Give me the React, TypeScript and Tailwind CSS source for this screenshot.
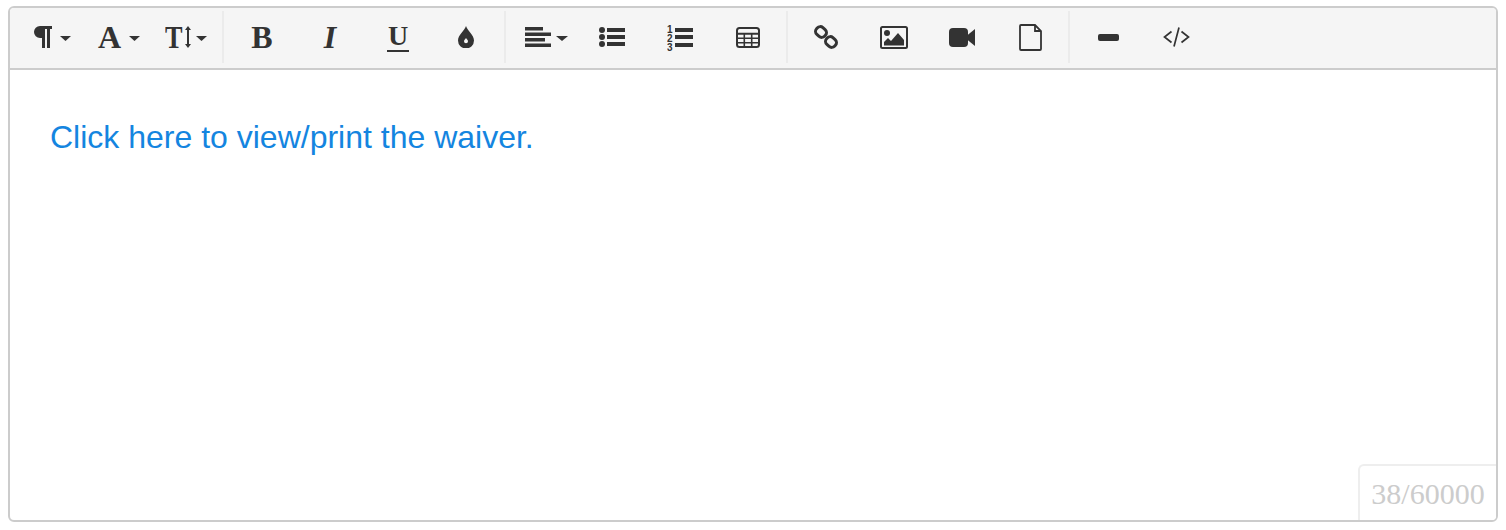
import React, { ReactNode } from "react";

const Caret = ({ w = 11 }: { w?: number }) => (
  <svg width={w} height="5" viewBox="0 0 12 6" preserveAspectRatio="none" className="shrink-0 mt-[3px]">
    <path d="M0 0h12L6 6z" fill="#333" />
  </svg>
);

const Btn = ({ children, gap = "gap-2" }: { children: ReactNode; gap?: string }) => (
  <div className={`w-[68px] h-[52px] flex items-center justify-center text-[#333] ${gap}`}>{children}</div>
);

const Sep = ({ first }: { first?: boolean }) => (
  <div className={`w-[2px] h-[52px] bg-[#ebebeb] mr-[4px] ${first ? "" : "ml-[4px]"}`} />
);

const Glyph = ({ children, className }: { children: ReactNode; className: string }) => (
  <span className={`font-['Liberation_Serif',serif] leading-none text-[#333] ${className}`}>{children}</span>
);

const App: React.FC = () => {
  return (
    <div className="w-[1506px] h-[530px] bg-white pl-2 pt-[6px]">
      <div className="relative w-[1490px] h-[516px] border-2 border-[#ccc] rounded-md overflow-hidden font-['Liberation_Sans',sans-serif]">
        <div className="flex items-center h-[62px] pl-2 pb-[6px] pt-[4px] bg-[#f5f5f5] border-b-2 border-[#ccc]">
          <Btn>
            <svg width="19" height="22" viewBox="0 0 19 22">
              <path d="M7 0h12v3h-2v19h-3V3h-2v19H9V12H7A6 6 0 0 1 7 0z" fill="#333" />
            </svg>
            <Caret />
          </Btn>
          <Btn>
            <span className="flex items-center gap-2 mr-[2px]">
              <Glyph className="text-[32px] font-bold">A</Glyph>
              <Caret />
            </span>
          </Btn>
          <Btn gap="gap-[5px]">
            <span className="flex items-center gap-[5px] mr-[4px]">
              <span className="flex items-center gap-[3px]">
                <Glyph className="inline-block w-[17px] text-[32px] font-bold origin-left scale-x-[0.82]">T</Glyph>
                <svg width="6" height="22" viewBox="0 0 6 22">
                  <path d="M3 0l3 4H4v14h2l-3 4-3-4h2V4H0z" fill="#333" />
                </svg>
              </span>
              <Caret />
            </span>
          </Btn>
          <Sep first />
          <Btn><Glyph className="text-[32px] font-bold">B</Glyph></Btn>
          <Btn><Glyph className="text-[32px] font-bold italic">I</Glyph></Btn>
          <Btn>
            <span className="flex flex-col items-center">
              <Glyph className="text-[28px] font-bold">U</Glyph>
              <span className="w-[22px] h-[2px] bg-[#333]" />
            </span>
          </Btn>
          <Btn>
            <svg width="16" height="22" viewBox="0 0 16 22">
              <path fillRule="evenodd" d="M8 0C9.500 5 16 9 16 14.500a8 8 0 0 1-16 0C0 9 6.500 5 8 0zM8 12c-1 1.300-2 2-2 3.200a2 2 0 0 0 4 0C10 14 9 13.300 8 12z" fill="#333" />
            </svg>
          </Btn>
          <Sep />
          <Btn>
            <span className="flex items-center gap-[5px] ml-[5px]">
              <svg width="26" height="20" viewBox="0 0 26 20">
                <path d="M0 0h18v3.500H0zM0 5.500h26V9H0zM0 11h20v3.500H0zM0 16.500h26V20H0z" fill="#333" />
              </svg>
              <Caret w={12} />
            </span>
          </Btn>
          <Btn>
            <svg width="26" height="20" viewBox="0 0 26 20">
              <circle cx="3" cy="3" r="3" fill="#333" />
              <circle cx="3" cy="10" r="3" fill="#333" />
              <circle cx="3" cy="17" r="3" fill="#333" />
              <path d="M8 1h18v4H8zM8 8h18v4H8zM8 15h18v4H8z" fill="#333" />
            </svg>
          </Btn>
          <Btn>
            <svg width="26" height="30" viewBox="0 0 26 30">
              <path d="M8 6h18v4H8zM8 13h18v4H8zM8 21h18v4H8z" fill="#333" />
              <text x="0" y="11" fontSize="10" fontWeight="700" fontFamily="Liberation Sans" fill="#333">1</text>
              <text x="0" y="20" fontSize="10" fontWeight="700" fontFamily="Liberation Sans" fill="#333">2</text>
              <text x="0" y="29" fontSize="10" fontWeight="700" fontFamily="Liberation Sans" fill="#333">3</text>
            </svg>
          </Btn>
          <Btn>
            <svg width="24" height="21" viewBox="0 0 24 21" fill="none" stroke="#333">
              <rect x="1" y="1" width="22" height="19" rx="2.500" strokeWidth="2" />
              <path d="M1 6.800h22" strokeWidth="2" />
              <path d="M1 11.300h22M1 15.700h22M8.300 6v14M15.700 6v14" strokeWidth="1.600" />
            </svg>
          </Btn>
          <Sep />
          <Btn>
            <svg width="24" height="24" viewBox="0 0 24 24" fill="none" stroke="#333" strokeWidth="3">
              <rect x="1.500" y="2.500" width="11" height="9" rx="4" transform="rotate(42 7 7)" />
              <rect x="11.500" y="12.500" width="11" height="9" rx="4" transform="rotate(42 17 17)" />
            </svg>
          </Btn>
          <Btn>
            <svg width="28" height="23" viewBox="0 0 28 23">
              <rect x="1" y="1" width="26" height="21" rx="1.500" fill="#f5f5f5" stroke="#333" strokeWidth="2" />
              <circle cx="7" cy="7" r="3" fill="#333" />
              <path d="M4 19.500v-3.500l4-4 3 3 7-8 6 7v5.500z" fill="#333" />
            </svg>
          </Btn>
          <Btn>
            <svg width="26" height="19" viewBox="0 0 26 19">
              <rect x="0" y="0" width="19" height="19" rx="4" fill="#333" />
              <path d="M18 7.500L26 1v17l-8-6.500z" fill="#333" />
            </svg>
          </Btn>
          <Btn>
            <svg width="23" height="27" viewBox="0 0 23 27" fill="none" stroke="#333" strokeWidth="1.800">
              <path d="M16 1H2a1 1 0 0 0-1 1v23a1 1 0 0 0 1 1h19a1 1 0 0 0 1-1V7z" />
              <path d="M16 1v6h6" />
            </svg>
          </Btn>
          <Sep />
          <Btn>
            <svg width="21" height="7" viewBox="0 0 21 7">
              <rect width="21" height="7" rx="2" fill="#333" />
            </svg>
          </Btn>
          <Btn>
            <svg width="27" height="20" viewBox="0 0 27 20" fill="none" stroke="#333" strokeWidth="1.700">
              <path d="M8.500 4.500L1.500 10l7 5.500M18.500 4.500l7 5.500-7 5.500M16 0.500L11 19.500" />
            </svg>
          </Btn>
        </div>
        <div className="pl-10 pt-[47px]">
          <a className="block text-[#1485e0] text-[32px] leading-[40px] w-fit">Click here to view/print the waiver.</a>
        </div>
        <div className="absolute right-0 bottom-0 w-[138px] h-[56px] border-2 border-r-0 border-b-0 border-[#eee] rounded-tl-md bg-white flex items-center justify-center font-['Liberation_Serif',serif] text-[30px] text-[#ccc]">
          38/60000
        </div>
      </div>
    </div>
  );
};

export default App;
